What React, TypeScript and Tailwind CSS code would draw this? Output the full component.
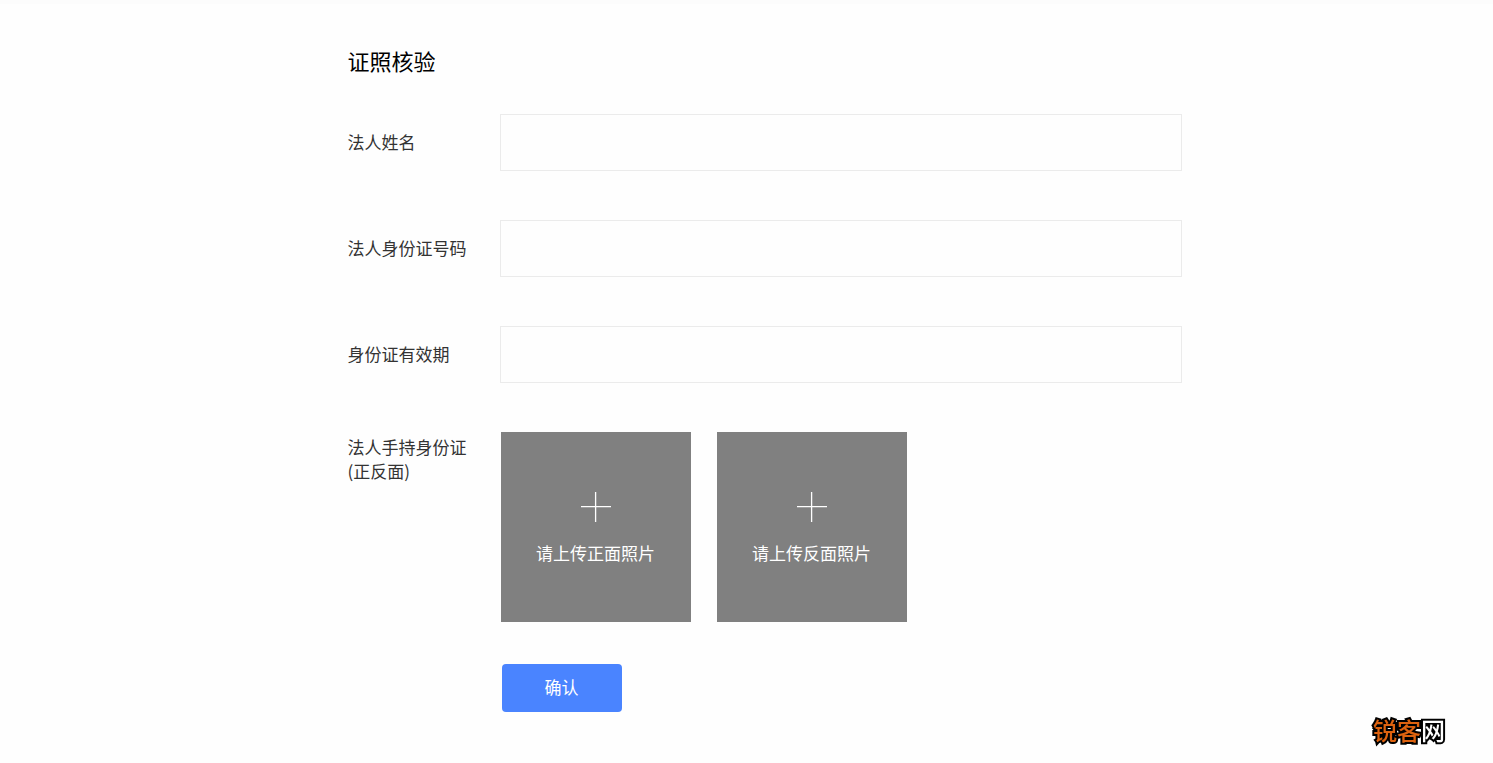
const fields = [
  { id: "name", label: "法人姓名" },
  { id: "id-number", label: "法人身份证号码" },
  { id: "validity", label: "身份证有效期" },
];

const uploads = ["请上传正面照片", "请上传反面照片"];

function PlusIcon() {
  return (
    <svg width="30" height="30" viewBox="0 0 30 30" fill="none" stroke="#fff" strokeWidth="1.3" aria-hidden="true">
      <path d="M14.6 0v30M0 14.6h30" />
    </svg>
  );
}

export default function App() {
  return (
    <div className="min-h-screen border-t-4 border-[#fcfcfc] bg-[#fefefe] px-6 pt-[38px] pb-12 font-['Noto_Sans_CJK_SC',sans-serif] text-[17px] text-[#333]">
      <main className="mx-auto w-full max-w-[870px] pl-9">
        <h1 className="text-[22px] leading-9 font-normal text-black">证照核验</h1>
        <form className="mt-9" onSubmit={(e) => e.preventDefault()}>
          <div className="flex flex-col gap-[49px]">
            {fields.map((f) => (
              <div key={f.id} className="flex items-center">
                <label htmlFor={f.id} className="w-[152px] shrink-0 pb-0.5 leading-6">{f.label}</label>
                <input id={f.id} type="text" className="h-[57px] min-w-0 flex-1 border border-[#ebebeb] bg-[#fefefe] px-4 outline-none" />
              </div>
            ))}
            <div className="flex items-start" role="group" aria-labelledby="photos-label">
              <div id="photos-label" className="w-[153px] shrink-0 pt-[3px] leading-6">
                法人手持身份证
                <br />
                (正反面)
              </div>
              <div className="flex gap-[26px]">
                {uploads.map((u) => (
                  <button key={u} type="button" className="flex size-[190px] flex-col items-center bg-[#808080] pt-[60px] text-white">
                    <PlusIcon />
                    <span className="mt-[19px] leading-6">{u}</span>
                  </button>
                ))}
              </div>
            </div>
          </div>
          <button type="submit" className="mt-[42px] ml-[154px] h-12 w-[120px] rounded bg-[#4a84ff] pb-0.5 text-white">确认</button>
        </form>
      </main>
      <div className="fixed right-12 bottom-[15px] text-[24px] leading-9 font-medium text-[#dd620f] [-webkit-text-stroke:4px_#000] [paint-order:stroke_fill] [stroke-linejoin:round]">
        锐客<span className="text-white">网</span>
      </div>
    </div>
  );
}
